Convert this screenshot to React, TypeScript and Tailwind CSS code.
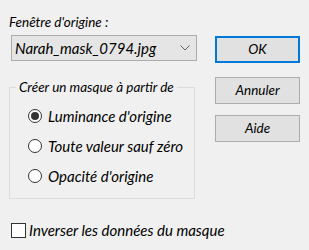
export default function App() {
    const font = { fontFamily: 'Lato, "Noto Sans", sans-serif' };
    return (
        <div
            className="w-[309px] h-[250px] bg-[#f0f0f0] flex text-[15px] italic text-black overflow-hidden whitespace-nowrap"
            style={font}
        >
            <div className="w-[206px] flex flex-col pl-[9px]">
                <p className="mt-[12px] leading-[20px] text-[13.5px]">Fenêtre d'origine :</p>
                <div className="mt-[3px] ml-[2px] w-[186px] h-[26px] bg-[#e5e5e5] border border-[#acacac] flex items-center justify-between pl-[3px] pr-[6px]">
                    <span>Narah_mask_0794.jpg</span>
                    <svg width="10" height="6" viewBox="0 0 10 6" fill="none">
                        <path d="M0.5 0.5 L5 5 L9.5 0.5" stroke="#606060" strokeWidth="1" />
                    </svg>
                </div>
                <fieldset className="mt-[16px] w-[186px] min-w-0 h-[122px] border border-[#dcdcdc]">
                    <legend className="ml-[6px] px-[3px] leading-[20px] text-[13.5px]">Créer un masque à partir de</legend>
                    <div className="flex flex-col gap-[16px] mt-[12px] pl-[18px]">
                        <label className="flex items-center gap-[6px] h-[14px]">
                            <span className="shrink-0 w-[14px] h-[14px] rounded-full border border-[#333] bg-white flex items-center justify-center">
                                <span className="w-[8px] h-[8px] rounded-full bg-[#333]" />
                            </span>
                            <span>Luminance d'origine</span>
                        </label>
                        <label className="flex items-center gap-[6px] h-[14px]">
                            <span className="shrink-0 w-[14px] h-[14px] rounded-full border border-[#333] bg-white" />
                            <span>Toute valeur sauf zéro</span>
                        </label>
                        <label className="flex items-center gap-[6px] h-[14px]">
                            <span className="shrink-0 w-[14px] h-[14px] rounded-full border border-[#333] bg-white" />
                            <span>Opacité d'origine</span>
                        </label>
                    </div>
                </fieldset>
                <label className="mt-[20px] ml-[2px] flex items-center gap-[3px]">
                    <span className="shrink-0 w-[15px] h-[15px] border border-[#333] bg-white" />
                    <span>Inverser les données du masque</span>
                </label>
            </div>
            <div className="flex flex-col pt-[36px] pl-[9px] gap-[14px] text-[13.5px]">
                <button className="w-[85px] h-[27px] bg-[#e1e1e1] border-2 border-[#0078d7] italic">OK</button>
                <button className="w-[85px] h-[27px] bg-[#e1e1e1] border border-[#adadad] italic">Annuler</button>
                <button className="-mt-[3px] w-[85px] h-[27px] bg-[#e1e1e1] border border-[#adadad] italic">Aide</button>
            </div>
        </div>
    );
}
